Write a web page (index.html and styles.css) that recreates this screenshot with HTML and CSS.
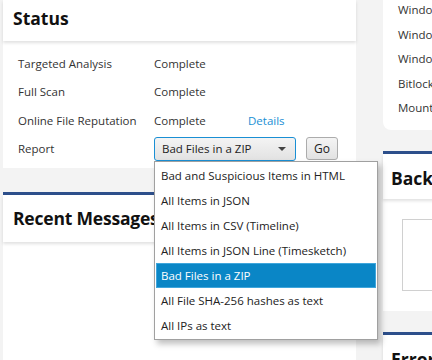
FILE: index.html
```html
<!DOCTYPE html>
<html lang="en">
<head>
    <meta charset="UTF-8">
    <title>Scan Status</title>
    <link rel="stylesheet" href="styles.css">
</head>
<body>
    <div class="layout">
        <div class="column left-col">
            <div class="card status-card">
                <div class="card-header"><h2>Status</h2></div>
                <div class="status-body">
                    <div class="status-row"><span class="label">Targeted Analysis</span><span class="value">Complete</span></div>
                    <div class="status-row"><span class="label">Full Scan</span><span class="value">Complete</span></div>
                    <div class="status-row"><span class="label">Online File Reputation</span><span class="value">Complete</span><a class="details" href="#">Details</a></div>
                    <div class="status-row report-row">
                        <span class="label">Report</span>
                        <div class="combo">
                            <div class="combo-box">
                                <span>Bad Files in a ZIP</span>
                                <span class="arrow"></span>
                            </div>
                            <ul class="combo-list">
                                <li>Bad and Suspicious Items in HTML</li>
                                <li>All Items in JSON</li>
                                <li>All Items in CSV (Timeline)</li>
                                <li>All Items in JSON Line (Timesketch)</li>
                                <li class="selected">Bad Files in a ZIP</li>
                                <li>All File SHA-256 hashes as text</li>
                                <li>All IPs as text</li>
                            </ul>
                        </div>
                        <button class="go-btn">Go</button>
                    </div>
                </div>
            </div>
            <div class="card accent messages-card">
                <div class="card-header"><h2>Recent Messages</h2></div>
                <div class="messages-body"></div>
            </div>
        </div>
        <div class="column right-col">
            <div class="card info-card">
                <ul class="info-list">
                    <li>Windows Defender</li>
                    <li>Windows Firewall</li>
                    <li>Windows Update</li>
                    <li>Bitlocker</li>
                    <li>Mounted Drives</li>
                </ul>
            </div>
            <div class="card accent backup-card">
                <div class="card-header"><h2>Backup</h2></div>
                <div class="backup-body"><div class="backup-box"></div></div>
            </div>
            <div class="card accent errors-card">
                <div class="card-header"><h2>Errors</h2></div>
            </div>
        </div>
    </div>
</body>
</html>
```

FILE: styles.css
```css
/* Base */
body {
    margin: 0;
    background: #f3f3f3;
    font-family: 'Open Sans', 'Noto Sans', sans-serif;
    font-size: 11.5px;
    color: #222;
    overflow: hidden;
}

.layout {
    display: grid;
    grid-template-columns: 353px 200px;
    column-gap: 27px;
    padding-left: 3px;
    width: 700px;
}

.column {
    display: flex;
    flex-direction: column;
}

/* Cards */
.card {
    background: #fff;
    border-radius: 0 0 8px 8px;
}

.card.accent {
    border-top: 3px solid #2d4f8b;
    border-radius: 0;
}

.card-header {
    box-shadow: 0 2px 3px rgba(0, 0, 0, 0.12);
    position: relative;
}

.card-header h2 {
    margin: 0;
    font-size: 17.5px;
    font-weight: bold;
    color: #111;
}

/* Status */
.status-card {
    height: 168px;
    border-radius: 0;
}

.status-card .card-header {
    height: 41px;
    padding-left: 10px;
}

.status-card h2 {
    line-height: 37px;
}

.status-body {
    padding: 8px 0 0 15px;
}

.status-row {
    display: flex;
    align-items: center;
    height: 28.5px;
}

.label {
    width: 136px;
    color: #333;
}

.value {
    width: 94px;
    color: #333;
}

.details {
    color: #1a8fd4;
    text-decoration: none;
}

.report-row {
    position: relative;
}

/* Combo box */
.combo {
    position: relative;
}

.combo-box {
    box-sizing: border-box;
    width: 142px;
    height: 24px;
    border: 1px solid #1a8fd4;
    border-radius: 3px;
    background: linear-gradient(#f4f4f4, #e2e2e2);
    display: flex;
    align-items: center;
    justify-content: space-between;
    padding: 0 9px 0 7px;
    color: #222;
}

.arrow {
    width: 0;
    height: 0;
    border-left: 4px solid transparent;
    border-right: 4px solid transparent;
    border-top: 4px solid #444;
}

.combo-list {
    position: absolute;
    left: 0;
    top: 24px;
    z-index: 5;
    margin: 0;
    padding: 1px;
    list-style: none;
    width: 220px;
    background: #fff;
    border: 1px solid #a0a0a0;
    box-shadow: 3px 4px 6px rgba(0, 0, 0, 0.25);
}

.combo-list li {
    height: 25px;
    line-height: 25px;
    padding-left: 5px;
    color: #222;
    box-sizing: border-box;
}

.combo-list li.selected {
    background: #0a86c6;
    border: 1px solid #3fa6dc;
    line-height: 23px;
    padding-left: 4px;
    color: #fff;
}

.go-btn {
    margin-left: 10px;
    width: 32px;
    height: 23px;
    border: 1px solid #acacac;
    border-radius: 3px;
    background: linear-gradient(#f4f4f4, #e2e2e2);
    font-family: inherit;
    font-size: 12px;
    color: #222;
    padding: 0;
}

/* Recent messages */
.messages-card {
    margin-top: 24px;
    flex: 1;
    height: 200px;
}

.messages-card .card-header {
    height: 47px;
    padding-left: 10px;
}

.messages-card h2 {
    line-height: 47px;
    letter-spacing: -0.2px;
}

/* Right column */
.info-card {
    height: 130px;
}

.info-list {
    margin: 0;
    padding: 0 0 0 15px;
    list-style: none;
}

.info-list li {
    height: 24.5px;
    line-height: 20px;
    color: #333;
}

.backup-card {
    margin-top: 21px;
    height: 157px;
}

.backup-card .card-header {
    height: 45px;
    padding-left: 8px;
}

.backup-card h2 {
    line-height: 48px;
}

.backup-body {
    padding: 20px 0 0 19px;
}

.backup-box {
    height: 70px;
    border: 1px solid #d0d0d0;
}

.errors-card {
    margin-top: 21px;
    height: 60px;
}

.errors-card .card-header {
    padding-left: 8px;
}

.errors-card h2 {
    line-height: 48px;
}
```
